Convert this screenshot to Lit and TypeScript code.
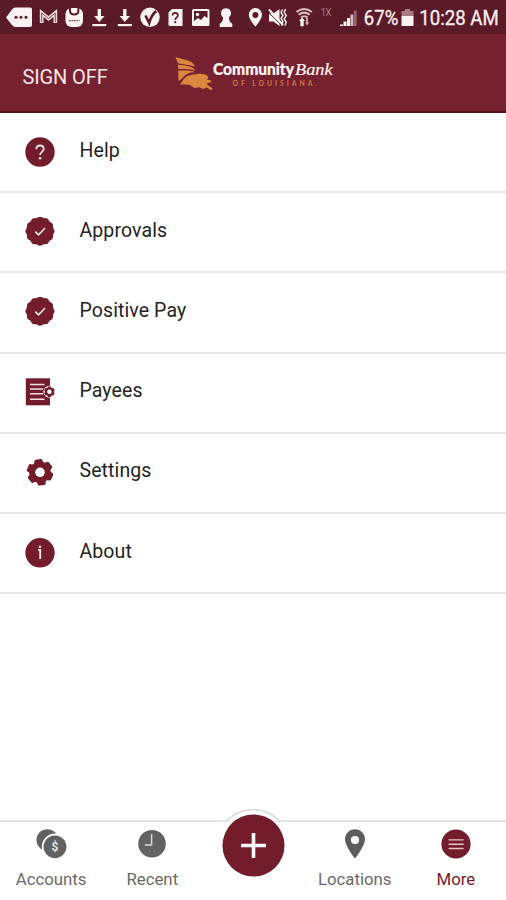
import { LitElement, html, svg, css } from "lit";
import { customElement, property } from "lit/decorators.js";

const scallop = (cx: number, cy: number, r: number, depth: number, n: number) => {
  let d = "";
  for (let i = 0; i <= 96; i++) {
    const a = (i / 96) * Math.PI * 2;
    const q = r - depth + depth * Math.cos(a * n);
    d += `${i ? "L" : "M"}${(cx + q * Math.sin(a)).toFixed(2)} ${(cy - q * Math.cos(a)).toFixed(2)}`;
  }
  return d + "Z";
};

const seal = svg`
  <path fill="#731c2c" d=${scallop(15, 14.2, 14.6, 0.5, 12)} />
  <path d="M10.3 14.6l3.2 3.3 6.6-6.9" fill="none" stroke="#f6e4e6" stroke-width="1.6" />`;

const rowIcons: Record<string, unknown> = {
  help: svg`<circle cx="15" cy="15" r="14.7" fill="#731c2c" />
    <path d="M11.3 12.2c0-2.400 1.500-3.700 3.700-3.700s3.700 1.300 3.700 3.400c0 2.900-3.600 3.200-3.600 6.200" fill="none" stroke="#f6e4e6" stroke-width="1.8" />
    <circle cx="15.100" cy="21.200" r="1.3" fill="#f6e4e6" />`,
  seal,
  payees: svg`<path fill="#731c2c" d="M.8.3h24.200v27H.8z" />
    <path d="M5 6.500h14.500M5 11.100h13M5 15.700h13M5 21.200h14.500" stroke="#f3dfe2" stroke-width="1.500" />
    <circle cx="24.400" cy="13.800" r="6" fill="#fff" />
    <g fill="#731c2c"><circle cx="24.400" cy="13.800" r="4.500" />
      ${[0, 60, 120].map((a) => svg`<path transform="rotate(${a} 24.400 13.800)" d="M22.800 8.500h3.200v10.600h-3.200z" />`)}
    </g><circle cx="24.400" cy="13.800" r="2.200" fill="#fff" />`,
  settings: svg`<g fill="#731c2c"><circle cx="15" cy="14.300" r="10.700" />
      ${[-8, 52, 112, 172, 232, 292].map((a) => svg`<path transform="rotate(${a} 15 14.300)" d="M10 7l1-4.500q.2-1.300 1.500-1.300h5q1.300 0 1.500 1.300L20 7z" />`)}
    </g><circle cx="15" cy="14.300" r="4.800" fill="#fff" />`,
  about: svg`<circle cx="15" cy="14.800" r="14.7" fill="#731c2c" />
    <path d="M13.200 12h2v8.900" fill="none" stroke="#f6e4e6" stroke-width="1.900" /><circle cx="15" cy="8.800" r="1.300" fill="#f6e4e6" />`,
};

const tabIcons: Record<string, unknown> = {
  accounts: svg`<circle cx="12.3" cy="11" r="10.8" fill="#626262" />
    <circle cx="20" cy="17.8" r="13.2" fill="#fff" />
    <circle cx="20" cy="17.8" r="11.4" fill="#626262" />
    <text x="20" y="22.200" text-anchor="middle" class="coin">$</text>`,
  recent: svg`<circle cx="16" cy="14.800" r="13.8" fill="#626262" />
    <path d="M15.6 5v10.900H8.900" fill="none" stroke="#d8d8d8" stroke-width="1.5" />`,
  locations: svg`<path fill="#5c5c5c" fill-rule="evenodd" d="M16 .2C10.300.2 6 4.600 6 10.100 6 17.300 16 29.600 16 29.600s10-12.300 10-19.500C26 4.600 21.700.2 16 .2zM16 7a4.100 4.100 0 110 8.200A4.100 4.100 0 0116 7z" />`,
  more: svg`<circle cx="16" cy="15" r="14.6" fill="#731c2c" />
    <path d="M8.600 10.900h15M8.600 15.200h15M8.600 19.500h15" stroke="#e6c3c9" stroke-width="1.4" />`,
};

@customElement("status-bar")
class StatusBar extends LitElement {
  static styles = css`
    :host { display: block; height: 34px; background: #5b1a28; }
    svg { display: block; }
    text { font-family: Roboto, sans-serif; fill: #fbeef0; }
    .reading { font-size: 20.500px; stroke: #fbeef0; stroke-width: .3px; }
    .network { font-size: 10px; fill: #a77984; }
  `;
  render() {
    return html`<svg width="506" height="34" viewBox="0 0 506 34" fill="#fbf3f2">
      <path d="M6 17.500l6-8q1.500-2 3.500-2H30q2 0 2 2V25q0 2-2 2H15.500q-2 0-3.500-2z" />
      <g fill="#5b1a28"><circle cx="16" cy="17.300" r="1.500" /><circle cx="21" cy="17.300" r="1.500" /><circle cx="26" cy="17.300" r="1.500" /></g>
      <path d="M41.700 23V13l6.800 5.500L55.300 13v10" fill="none" stroke="#e9d9db" stroke-width="3.800" />
      <path d="M41.700 22V13l6.800 5.500L55.300 13v9" fill="none" stroke="#5b1a28" stroke-width=".7" />
      <rect x="65.500" y="8" width="17.500" height="19" rx="6" />
      <path d="M70 8v2.500q0 4 4.200 4t4.200-4V8" fill="none" stroke="#5b1a28" stroke-width="2" />
      <path d="M69 20.700h10.500" stroke="#5b1a28" stroke-width="1" stroke-dasharray="1.800 .7" />
      ${[99.3, 124.8].map((x) => svg`<g transform="translate(${x} 0)"><path d="M-1.700 9h3.400v7h3.500L0 22l-5.200-6h3.500z" /><path d="M-7 24h14v2.200H-7z" /></g>`)}
      <circle cx="150" cy="17.300" r="9.700" />
      <path d="M145.500 15.500l3.700 7.500c1-4 2.500-8 7-12" fill="none" stroke="#5b1a28" stroke-width="2.600" />
      <path d="M172 9h10.500v17H170q-1.500 0-1.500-1.500V12.500z" />
      <path d="M172.500 15.500c0-3.600 5.400-3.400 5.400 0 0 2-2.600 2-2.600 4.600" fill="none" stroke="#5b1a28" stroke-width="1.700" /><circle cx="175.300" cy="22.200" r="1.100" fill="#5b1a28" />
      <path fill-rule="evenodd" d="M193.500 9h14.500q1.500 0 1.500 1.500v14q0 1.500-1.500 1.500h-14.500q-1.500 0-1.500-1.500v-14q0-1.500 1.500-1.500zM194 11v10l4-3 3 2 3.500-4 3 2v-7z" />
      <circle cx="197.500" cy="14.500" r="1.700" />
      <path d="M226 8.200a5 5 0 014.500 7.300l-1.700 2.300 1 3.700 2.500 2.500V27h-12.600v-3l2.500-2.500 1-3.700-1.700-2.300A5 5 0 01226 8.200z" />
      <path fill-rule="evenodd" d="M255.400 8a6.600 6.600 0 016.600 6.600c0 5-6.600 12.100-6.600 12.100s-6.600-7.100-6.600-12.100A6.600 6.600 0 01255.400 8zm0 4a3 3 0 100 6 3 3 0 000-6z" />
      <path d="M269 13.500h4.500l6-4.500v17l-6-4.500H269z" />
      <path d="M268 12l14 13.500" stroke="#5b1a28" stroke-width="1" /><path d="M269 9.500l14 15.500" stroke="#fbf3f2" stroke-width="1.900" />
      <path d="M282.500 9.500l-1.500 3 2 3-2 3 2 3-1.500 4M285.500 9l-1.300 3.300 2 3.300-2 3.300 2 3.300-1.200 3.500" fill="none" stroke="#fbf3f2" stroke-width="1.400" />
      <g fill="none" stroke="#d8bcc1" stroke-width="2"><path d="M296.500 12q7.700-6 15.400 0" /><path d="M298.700 14.800q5.500-4.300 11 0" /><path d="M301 17.500q3.300-2.600 6.600 0" /></g>
      <path d="M303.700 21v5.300h-3.300V21H299l3-3.500 3 3.500z" /><path fill="#c9a5ac" d="M306 18h2v4.500h1.300l-2.300 3-2-3h1z" />
      <text class="network" x="320.500" y="16" textLength="11">1X</text>
      <g><path d="M340 24.500h3V26h-3zM343.500 21.500h3V26h-3zM347 18h3v8h-3z" /><path fill="#d4b7bd" d="M350.400 14.500h3V26h-3z" /><path fill="#94616c" d="M353.700 10.500h3V26h-3z" /></g>
      <text class="reading" x="363.800" y="25.300" textLength="34.500" lengthAdjust="spacingAndGlyphs">67%</text>
      <path fill="#a77b84" d="M405 9h5v2h3.500v5.500h-12V11h3.500z" /><path d="M401.500 16h12v10h-12z" />
      <text class="reading" x="419.200" y="25.300" textLength="79.500" lengthAdjust="spacingAndGlyphs">10:28 AM</text>
    </svg>`;
  }
}

@customElement("app-header")
class AppHeader extends LitElement {
  static styles = css`
    :host { display: flex; box-sizing: border-box; height: 79px; background: #76212f; border-bottom: 2px solid #541019; align-items: center; }
    .sign { width: 174px; box-sizing: border-box; padding: 8px 0 0 22.500px; font: 20px/24px Roboto, sans-serif; letter-spacing: -.12px; color: #f8e5e7; }
    .logo { display: block; margin-top: 2px; }
    .name { font: 900 16px Lato, sans-serif; fill: #fff5f3; stroke: #fff5f3; stroke-width: .2px; }
    .bank { font: italic 17.500px "Liberation Serif", serif; fill: #fff5f3; stroke: #fff5f3; stroke-width: .2px; }
    .state { font: 700 6.800px Lato, sans-serif; fill: #cf7a40; }
  `;
  render() {
    return html`<span class="sign">SIGN OFF</span>
      <svg class="logo" width="162" height="40" viewBox="174 54 162 40">
        <g fill="#dc8740">
          <path d="M175.300 57c5.500 2 13.500 2.600 17.200 6 1.300 1.200 1.800 2.200 2 3.600-5-2.200-11.500-2-16.500-3.400z" />
          <path d="M177.800 64.600c6.500 1.300 13.700.8 17.700 5.800-6-1.600-12-.6-17.300-1.600z" />
          <path d="M178.300 70.200c5.500.6 12-.2 16.700 1.700-6 .5-9.500 2-12.500 6l-4 3.400z" />
          <path d="M179.800 84.500c3-2.800 3.500-6.800 8.500-8.800 3.500-1.500 7-1 10-2 3 0 6 .3 8.500 1.200l1.500 2.500-1.200 2.400 4.500.6-.8 1.800-4.300 1.300 2.500 2.500 3.700 2.500-1.500 1.700-4.500-2.700-3.500 1.500-4-1.700-5 .8-4.500-3.300-4.700-.3z" />
        </g>
        <text class="name" x="213" y="75" textLength="81" lengthAdjust="spacingAndGlyphs">Community</text>
        <text class="bank" x="295" y="75" textLength="37.500" lengthAdjust="spacingAndGlyphs">Bank</text>
        <text class="state" x="232.500" y="86" textLength="84.500">OF LOUISIANA.</text>
      </svg>`;
  }
}

@customElement("menu-row")
class MenuRow extends LitElement {
  @property() icon = "";
  @property() label = "";
  static styles = css`
    :host { display: flex; box-sizing: border-box; height: 80.200px; padding-left: 25px; align-items: center; border-bottom: 2px solid #e7e7e7; }
    svg { display: block; flex: none; margin-right: 24.500px; }
    span { font: 19.500px/24px Roboto, sans-serif; letter-spacing: .1px; color: #242424; padding-bottom: 3px; }
  `;
  render() {
    return html`<svg width="30" height="30" viewBox="0 0 30 30">${rowIcons[this.icon]}</svg><span>${this.label}</span>`;
  }
}

@customElement("tab-bar")
class TabBar extends LitElement {
  static styles = css`
    :host { display: grid; grid-template-columns: repeat(5, 1fr); box-sizing: border-box; height: 80px; border-top: 2px solid #e5e5e5; background: #fff; }
    .tab { display: flex; flex-direction: column; align-items: center; padding: 7px 0 0 1px; font: 16.800px/20px Roboto, sans-serif; color: #6a6a6a; }
    .tab svg { display: block; margin-bottom: 10px; }
    .active { color: #731c2c; }
    .coin { font: 700 12px Roboto, sans-serif; fill: #e2e2e2; }
    .add { display: block; justify-self: center; margin-top: -13px; }
  `;
  tab(icon: string, label: string, active = false) {
    return html`<div class="tab ${active ? "active" : ""}"><svg width="32" height="30" viewBox="0 0 32 30">${tabIcons[icon]}</svg>${label}</div>`;
  }
  render() {
    return html`
      ${this.tab("accounts", "Accounts")} ${this.tab("recent", "Recent")}
      <svg class="add" width="74" height="74" viewBox="0 0 74 74">
        <path d="M10.500 12a36.500 36.500 0 0153 0" fill="#fff" stroke="#dedede" stroke-width="1.600" />
        <circle cx="37.500" cy="36.500" r="31" fill="#731c2c" />
        <path d="M25 36.500h25M37.500 24v25" stroke="#fff" stroke-width="3.600" />
      </svg>
      ${this.tab("locations", "Locations")} ${this.tab("more", "More", true)}
    `;
  }
}

@customElement("app-root")
class AppRoot extends LitElement {
  static styles = css`
    :host { display: flex; flex-direction: column; height: 900px; background: #fff; overflow: hidden; }
    main { flex: 1; }
  `;
  render() {
    const rows = [
      ["help", "Help"], ["seal", "Approvals"], ["seal", "Positive Pay"],
      ["payees", "Payees"], ["settings", "Settings"], ["about", "About"],
    ];
    return html`<status-bar></status-bar><app-header></app-header>
      <main>${rows.map(([icon, label]) => html`<menu-row icon=${icon} label=${label}></menu-row>`)}</main>
      <tab-bar></tab-bar>`;
  }
}
